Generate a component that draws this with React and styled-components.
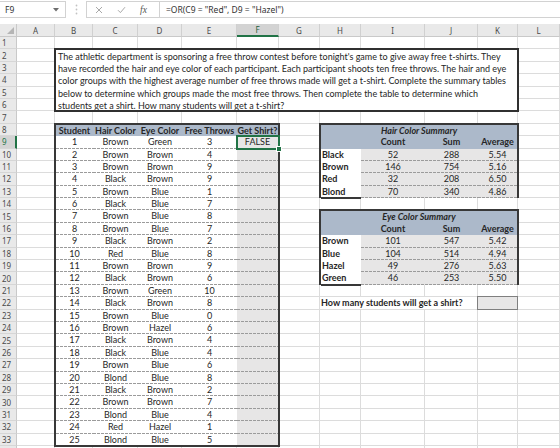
import React from "react";
import styled, { createGlobalStyle, css } from "styled-components";

/* ---------- data ---------- */

const COLS = [
  ["A", 38], ["B", 38], ["C", 45], ["D", 44], ["E", 55], ["F", 42],
  ["G", 41], ["H", 41], ["I", 64], ["J", 53], ["K", 40], ["L", 42],
];
const ROW_H = 12.4;
const ROW_COUNT = 33;
const TEMPLATE_COLS = `17px ${COLS.map(([, w]) => w + "px").join(" ")}`;
const TEMPLATE_ROWS = `13px repeat(${ROW_COUNT}, ${ROW_H}px) 12px`;

const INTRO = [
  "The athletic department is sponsoring a free throw contest before tonight's game to give away free t-shirts. They",
  "have recorded the hair and eye color of each participant. Each participant shoots ten free throws. The hair and eye",
  "color groups with the highest average number of free throws made will get a t-shirt. Complete the summary tables",
  "below to determine which groups made the most free throws. Then complete the table to determine which",
  "students get a shirt. How many students will get a t-shirt?",
];

const STUDENTS = [
  [1, "Brown", "Green", 3], [2, "Brown", "Brown", 4], [3, "Brown", "Brown", 9],
  [4, "Black", "Brown", 9], [5, "Brown", "Blue", 1], [6, "Black", "Blue", 7],
  [7, "Brown", "Blue", 8], [8, "Brown", "Blue", 7], [9, "Black", "Brown", 2],
  [10, "Red", "Blue", 8], [11, "Brown", "Brown", 9], [12, "Black", "Brown", 6],
  [13, "Brown", "Green", 10], [14, "Black", "Brown", 8], [15, "Brown", "Blue", 0],
  [16, "Brown", "Hazel", 6], [17, "Black", "Brown", 4], [18, "Black", "Blue", 4],
  [19, "Brown", "Blue", 6], [20, "Blond", "Blue", 8], [21, "Black", "Brown", 2],
  [22, "Brown", "Brown", 7], [23, "Blond", "Blue", 4], [24, "Red", "Hazel", 1],
  [25, "Blond", "Blue", 5],
];

const HAIR = [
  ["Black", 52, 288, "5.54"], ["Brown", 146, 754, "5.16"],
  ["Red", 32, 208, "6.50"], ["Blond", 70, 340, "4.86"],
];

const EYE = [
  ["Brown", 101, 547, "5.42"], ["Blue", 104, 514, "4.94"],
  ["Hazel", 49, 276, "5.63"], ["Green", 46, 253, "5.50"],
];

const GREEN = "#217346";
const HEAD_BLUE = "#acb9ca";
const SHADE = "#e7e6e6";
const INK = "#262626";
const FRAME = "#383838";

/* ---------- component ---------- */

function Summary({ title, rows, r }) {
  return (
    <SummaryBox $r={r} $rs={6} $c={8} $cs={4}>
      <SummaryTitle>{title}</SummaryTitle>
      <SummaryHead />
      <SummaryHead>Count</SummaryHead>
      <SummaryHead>Sum</SummaryHead>
      <SummaryHead>Average</SummaryHead>
      {rows.map(([label, count, sum, avg], i) => (
        <React.Fragment key={label}>
          <SummaryLabel $last={i === rows.length - 1}>{label}</SummaryLabel>
          <SummaryValue>{count}</SummaryValue>
          <SummaryValue>{sum}</SummaryValue>
          <SummaryValue>{avg}</SummaryValue>
        </React.Fragment>
      ))}
    </SummaryBox>
  );
}

export default function App() {
  const rowNums = Array.from({ length: ROW_COUNT }, (_, i) => i + 1);

  return (
    <Window>
      <GlobalStyle />

      <FormulaBar>
        <NameBox>
          <span>F9</span>
          <svg width="6" height="4" viewBox="0 0 6 4">
            <path d="M0 0 H6 L3 3.5 Z" fill="#6d6d6d" />
          </svg>
        </NameBox>
        <Grip>
          <svg width="3" height="11" viewBox="0 0 3 11">
            <circle cx="1.5" cy="1.5" r="0.9" fill="#c2c2c2" />
            <circle cx="1.5" cy="5.5" r="0.9" fill="#c2c2c2" />
            <circle cx="1.5" cy="9.5" r="0.9" fill="#c2c2c2" />
          </svg>
        </Grip>
        <FxButtons>
          <svg width="8" height="8" viewBox="0 0 8 8">
            <path d="M1 1 L7 7 M7 1 L1 7" stroke="#a9a9a9" strokeWidth="1" />
          </svg>
          <svg width="9" height="8" viewBox="0 0 9 8">
            <path d="M1 4.2 L3.4 6.6 L8 1.2" stroke="#a9a9a9" strokeWidth="1" fill="none" />
          </svg>
          <FxMark>fx</FxMark>
        </FxButtons>
        <FormulaInput>=OR(C9 = "Red", D9 = "Hazel")</FormulaInput>
      </FormulaBar>

      <Sheet>
        <Layer>
          <Corner />
          {COLS.map(([key]) => (
            <ColHead key={key} $active={key === "F"}>{key}</ColHead>
          ))}
          {rowNums.map((n) => (
            <React.Fragment key={n}>
              <RowHead $active={n === 9}>{n}</RowHead>
              {COLS.map(([key]) => (
                <GridCell key={key} />
              ))}
            </React.Fragment>
          ))}
          <RowHead />
          {COLS.map(([key]) => (
            <GridCell key={key} />
          ))}
        </Layer>

        <Layer>
          <TextBox $r={2} $rs={5} $c={2} $cs={10}>
            {INTRO.map((line) => (
              <Line key={line}>{line}</Line>
            ))}
          </TextBox>

          <DataTable $r={8} $rs={26} $c={2} $cs={5}>
            {["Student", "Hair Color", "Eye Color", "Free Throws", "Get Shirt?"].map((h) => (
              <HeadCell key={h}>{h}</HeadCell>
            ))}
            {STUDENTS.map(([n, hair, eye, throws], i) => {
              const last = i === STUDENTS.length - 1;
              return (
                <React.Fragment key={n}>
                  <TCell $last={last}>{n}</TCell>
                  <TCell $last={last}>{hair}</TCell>
                  <TCell $last={last}>{eye}</TCell>
                  <TCell $last={last}>{throws}</TCell>
                  <TCell $last={last} $shade>{i === 0 ? "FALSE" : ""}</TCell>
                </React.Fragment>
              );
            })}
          </DataTable>

          <Summary title="Hair Color Summary" rows={HAIR} r={8} />
          <Summary title="Eye Color Summary" rows={EYE} r={15} />

          <Question $r={22} $c={8} $cs={3}>How many students will get a shirt?</Question>
          <AnswerBox $r={22} $c={11} />

          <Selection $r={9} $c={6} />
        </Layer>
      </Sheet>
    </Window>
  );
}

/* ---------- styles ---------- */

const GlobalStyle = createGlobalStyle`
  html, body {
    margin: 0;
    padding: 0;
    background: #fff;
    overflow: hidden;
  }
  body {
    font-family: Lato, "Liberation Sans", sans-serif;
    color: ${INK};
  }
`;

const place = css`
  grid-row: ${(p) => p.$r + 1} / span ${(p) => p.$rs || 1};
  grid-column: ${(p) => p.$c + 1} / span ${(p) => p.$cs || 1};
`;

// Excel's dense "dashed" hairline
const dashedBottom = css`
  background-image: repeating-linear-gradient(to right, #9b9b9b 0 3px, transparent 3px 4px);
  background-size: 100% 1px;
  background-position: left bottom;
  background-repeat: no-repeat;
`;

const Window = styled.div`
  width: 560px;
  height: 448px;
  overflow: hidden;
  background: #fff;
`;

const FormulaBar = styled.div`
  display: flex;
  align-items: stretch;
  height: 17px;
  margin: 1px 0 6px;
  font-family: "Noto Sans", "Liberation Sans", sans-serif;
  font-size: 8.5px;
  color: #333;
`;

const NameBox = styled.div`
  width: 66px;
  box-sizing: border-box;
  display: flex;
  align-items: center;
  justify-content: space-between;
  padding: 0 6px 0 5px;
  border: 1px solid #d2d2d2;
  border-left: none;
`;

const Grip = styled.div`
  width: 20px;
  display: flex;
  align-items: center;
  justify-content: center;
`;

const FxButtons = styled.div`
  width: 73px;
  box-sizing: border-box;
  display: flex;
  align-items: center;
  gap: 14px;
  padding-left: 8px;
  border: 1px solid #d2d2d2;
  border-right: none;
`;

const FxMark = styled.span`
  font-family: "Liberation Serif", serif;
  font-style: italic;
  font-size: 9.5px;
  color: #555;
`;

const FormulaInput = styled.div`
  flex: 1;
  display: flex;
  align-items: center;
  padding-left: 6px;
  border: 1px solid #d2d2d2;
  border-right: none;
  white-space: nowrap;
`;

const Sheet = styled.div`
  display: grid;

  & > * {
    grid-area: 1 / 1;
  }
`;

const Layer = styled.div`
  display: grid;
  grid-template-columns: ${TEMPLATE_COLS};
  grid-template-rows: ${TEMPLATE_ROWS};
  font-size: 9px;
`;

const HeaderBase = css`
  box-sizing: border-box;
  font-family: "Noto Sans", "Liberation Sans", sans-serif;
  font-size: 8px;
  color: #4a4a4a;
  background: #e9e9e9;
`;

const Corner = styled.div`
  ${HeaderBase}
  position: relative;
  border-right: 1px solid #c9c9c9;
  border-bottom: 1px solid #c9c9c9;

  &::after {
    content: "";
    position: absolute;
    right: 2px;
    bottom: 2px;
    border-style: solid;
    border-width: 0 0 7px 7px;
    border-color: transparent transparent #b5b5b5 transparent;
  }
`;

const ColHead = styled.div`
  ${HeaderBase}
  display: flex;
  align-items: center;
  justify-content: center;
  border-right: 1px solid #d0d0d0;
  border-bottom: ${(p) => (p.$active ? `2px solid ${GREEN}` : "1px solid #c9c9c9")};
  background: ${(p) => (p.$active ? "#d3d3d3" : "#e9e9e9")};
  color: ${(p) => (p.$active ? "#1d5e3a" : "#4a4a4a")};
`;

const RowHead = styled.div`
  ${HeaderBase}
  display: flex;
  align-items: center;
  padding-left: 2px;
  border-bottom: 1px solid #d6d6d6;
  border-right: ${(p) => (p.$active ? `2px solid ${GREEN}` : "1px solid #c9c9c9")};
  background: ${(p) => (p.$active ? "#d3d3d3" : "#e9e9e9")};
  color: ${(p) => (p.$active ? GREEN : "#4a4a4a")};
`;

const GridCell = styled.div`
  box-sizing: border-box;
  border-right: 1px solid #dcdcdc;
  border-bottom: 1px solid #dcdcdc;
`;

const TextBox = styled.div`
  ${place}
  margin: -1px;
  border: 2px solid #303030;
  background: #fff;
  padding: 0.5px 2px 0;
  line-height: 12.2px;
  white-space: nowrap;
  overflow: hidden;
`;

const Line = styled.span`
  display: block;
`;

const DataTable = styled.div`
  ${place}
  margin: -1px;
  border: 2px solid ${FRAME};
  display: grid;
  grid-template-columns: 37px 45px 44px 55px 41px;
  grid-template-rows: ${ROW_H - 1}px repeat(24, ${ROW_H}px) ${ROW_H - 1}px;
  background: #fff;
`;

const HeadCell = styled.div`
  background: ${HEAD_BLUE};
  font-weight: 700;
  text-align: center;
  white-space: nowrap;
  line-height: ${ROW_H - 1}px;
`;

const TCell = styled.div`
  box-sizing: border-box;
  background-color: ${(p) => (p.$shade ? SHADE : "#fff")};
  ${(p) => !p.$last && dashedBottom}
  text-align: center;
  line-height: 12px;
`;

const SummaryBox = styled.div`
  ${place}
  margin: -1px -1px 0 -1px;
  border: 2px solid ${FRAME};
  border-bottom: none;
  display: grid;
  grid-template-columns: 40px 64px 53px 39px;
  grid-template-rows: ${ROW_H - 1}px repeat(5, ${ROW_H}px);
`;

const SummaryTitle = styled.div`
  grid-column: 1 / -1;
  background: ${HEAD_BLUE};
  font-weight: 700;
  font-style: italic;
  text-align: center;
  line-height: ${ROW_H - 1}px;
`;

const SummaryHead = styled.div`
  background: ${HEAD_BLUE};
  font-weight: 700;
  text-align: center;
  line-height: ${ROW_H}px;
`;

const SummaryLabel = styled.div`
  box-sizing: border-box;
  background: #fff;
  font-weight: 700;
  padding-left: 1px;
  line-height: 12px;
  ${(p) =>
    p.$last &&
    css`
      border-bottom: 2px solid ${FRAME};
      margin-bottom: -1px;
    `}
`;

const SummaryValue = styled.div`
  box-sizing: border-box;
  background-color: ${SHADE};
  ${dashedBottom}
  text-align: center;
  line-height: 12px;
`;

const Question = styled.div`
  ${place}
  margin: 0 1px 1px 0;
  background: #fff;
  font-weight: 700;
  padding-left: 1px;
  line-height: 12px;
  white-space: nowrap;
`;

const AnswerBox = styled.div`
  ${place}
  margin: -1px 0 0 -1px;
  border: 1px solid #7f7f7f;
  background: ${SHADE};
`;

const Selection = styled.div`
  ${place}
  position: relative;
  margin: -1px;
  border: 2px solid ${GREEN};

  &::after {
    content: "";
    position: absolute;
    right: -4px;
    bottom: -4px;
    width: 4px;
    height: 4px;
    background: ${GREEN};
    border: 1px solid #fff;
  }
`;
